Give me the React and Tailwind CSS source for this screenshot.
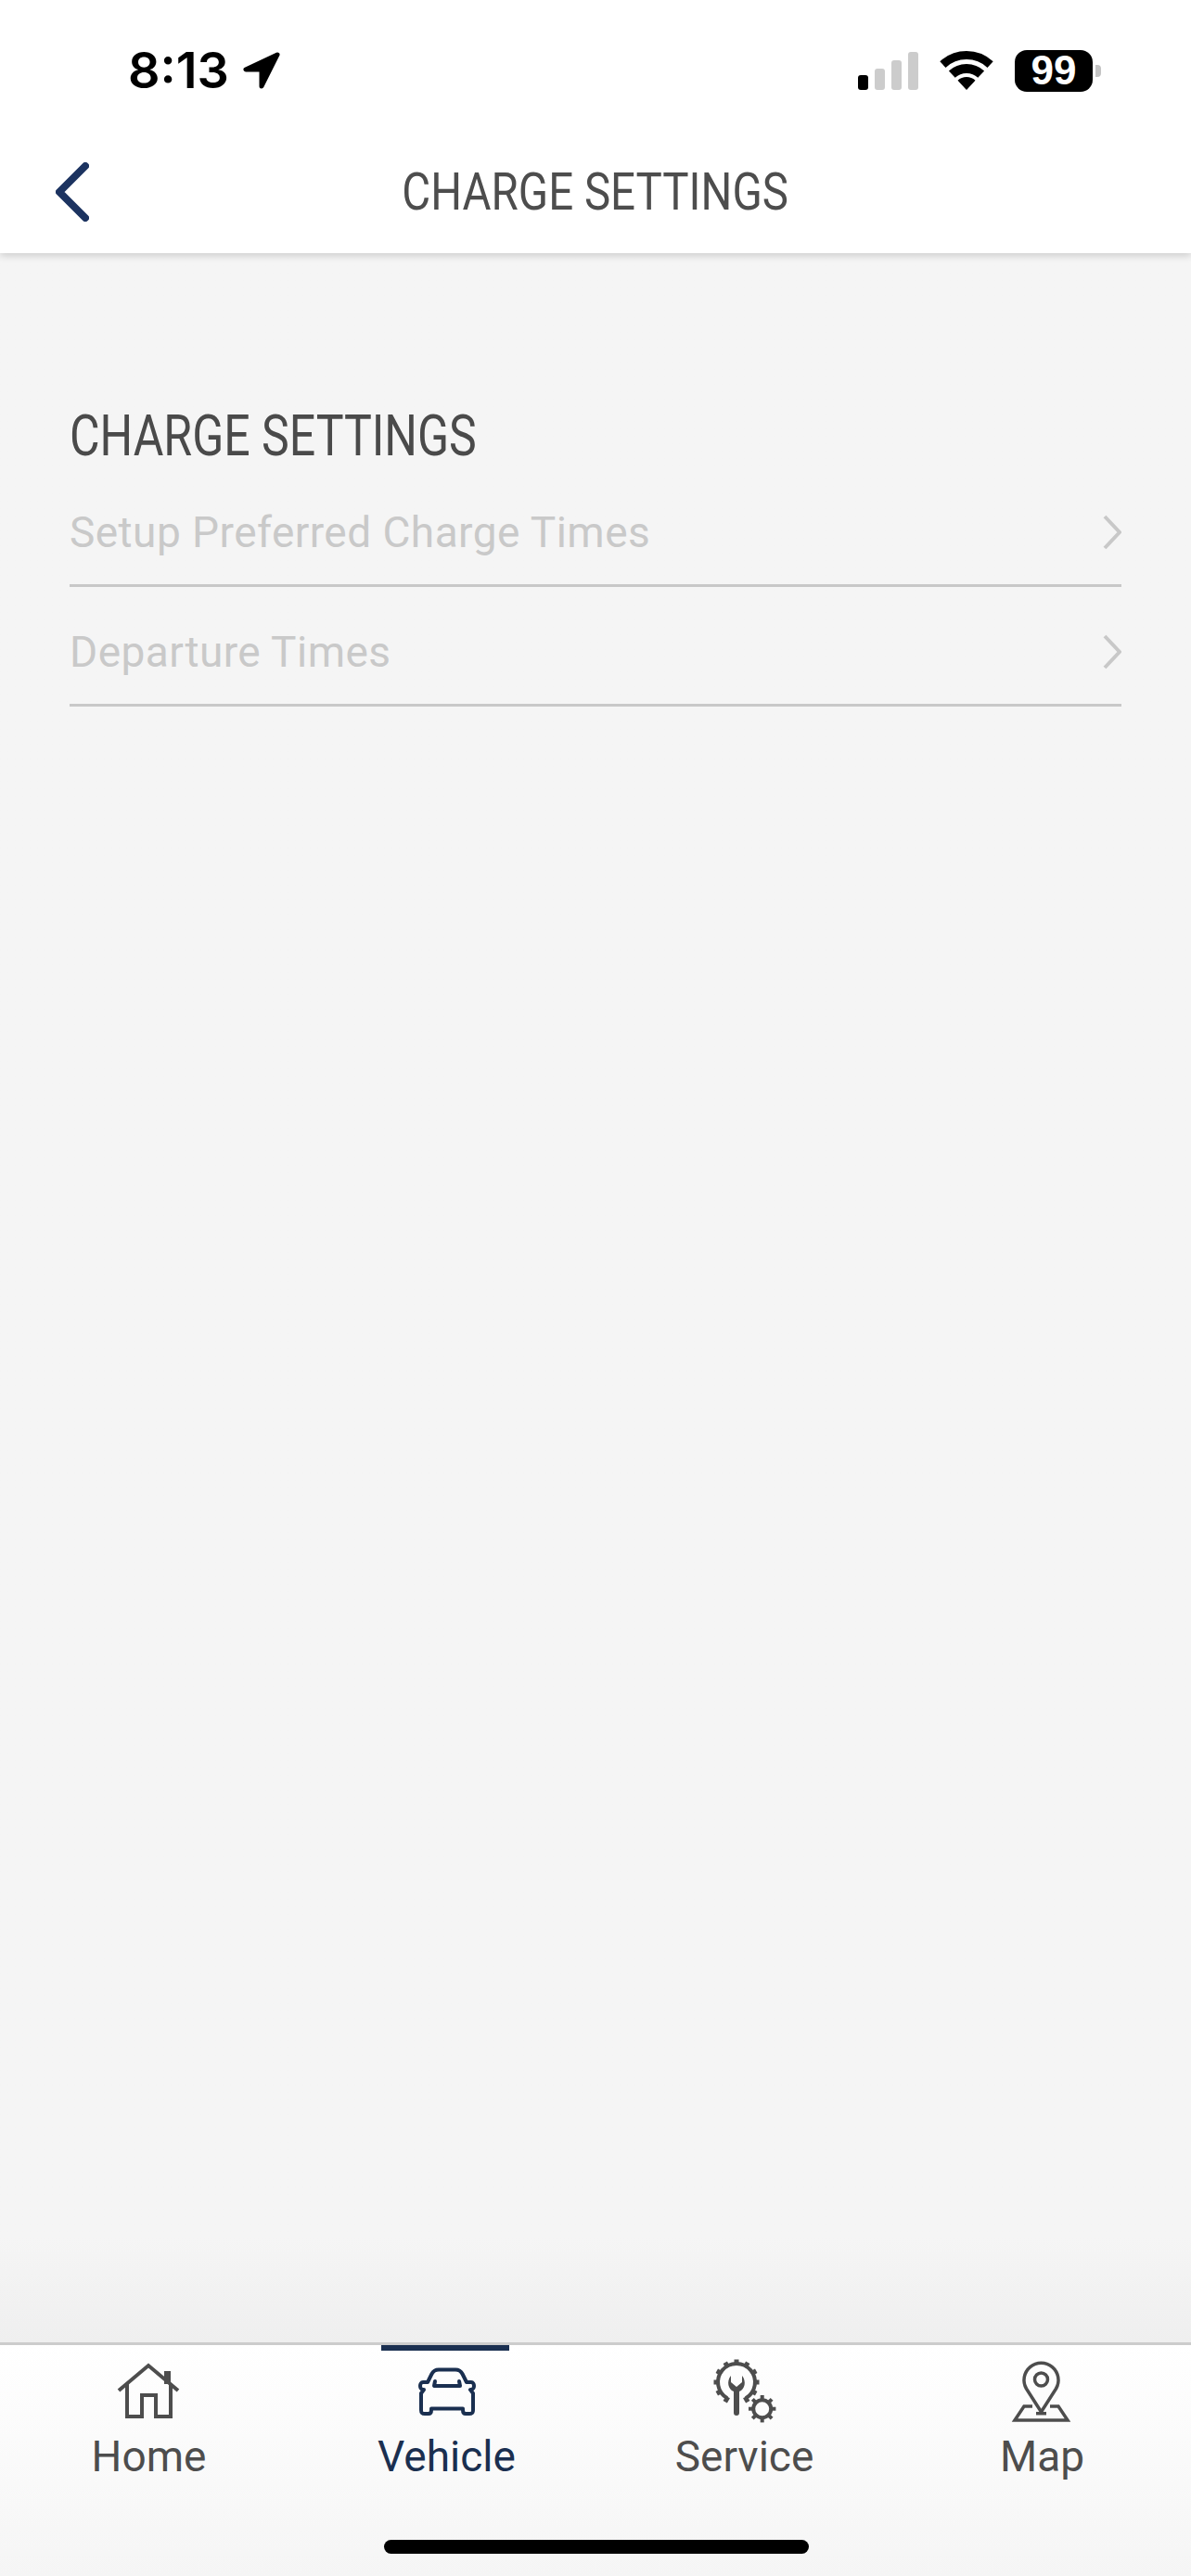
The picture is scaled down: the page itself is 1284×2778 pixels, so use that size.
const GEAR_ANGLES = [0, 30, 60, 90, 120, 150, 210, 240, 270, 300, 330]
const SMALL_GEAR_ANGLES = [0, 45, 90, 135, 180, 225, 270, 315]

function HomeIcon() {
  return (
    <svg width="70" height="62" viewBox="0 0 70 62" fill="none" stroke="currentColor" strokeWidth="4">
      <path d="M2 30 L34 3 L66 30" />
      <path d="M11 23 V58 H27 V35 H42 V58 H58 V23" />
      <rect x="51" y="9" width="7" height="14" fill="currentColor" stroke="none" />
    </svg>
  )
}

function CarIcon() {
  return (
    <svg width="66" height="52" viewBox="0 0 66 52" fill="none" stroke="currentColor" strokeWidth="4" strokeLinejoin="round" strokeLinecap="round">
      <path d="M24 2.5 C20 2.5 18 4 16.5 7 L12 16 H7 C3 16 3 24 7 24 H8 L5 28 V46 C5 49 6 50 9 50 H13 C15 50 16 49 16 46 V44.5 H50 V46 C50 49 51 50 53 50 H57 C60 50 61 49 61 46 V28 L58 24 H59 C63 24 63 16 59 16 H54 L49.5 7 C48 4 46 2.5 42 2.5 Z" />
      <path d="M20 15 L19 20 H47 L46 15" />
    </svg>
  )
}

function ServiceIcon() {
  return (
    <svg width="70" height="70" viewBox="0 0 70 70" fill="none" stroke="currentColor">
      <path d="M16 42.3 A20 20 0 1 1 36 42.3" strokeWidth="4" />
      {GEAR_ANGLES.map((angle) => (
        <rect key={angle} x="23.5" y="0.5" width="5" height="6" fill="currentColor" stroke="none" transform={`rotate(${angle} 26 25)`} />
      ))}
      <path d="M20 18 C15 24 17 33 23 35 V58 a3 3 0 0 0 6 0 V35 C35 33 37 24 32 18 V25 L26 30 L20 25 Z" fill="currentColor" stroke="none" />
      <circle cx="53.7" cy="53.7" r="9.5" strokeWidth="4" />
      {SMALL_GEAR_ANGLES.map((angle) => (
        <rect key={angle} x="51.7" y="39" width="4" height="5" fill="currentColor" stroke="none" transform={`rotate(${angle} 53.7 53.7)`} />
      ))}
    </svg>
  )
}

function MapIcon() {
  return (
    <svg width="70" height="70" viewBox="0 0 70 70" fill="none" stroke="currentColor" strokeWidth="3.5">
      <path d="M33.5 57 L17.5 32 A18.5 18.5 0 1 1 49.5 32 Z" strokeLinejoin="round" />
      <circle cx="33.5" cy="22" r="7" />
      <path d="M28 58.7 H39" />
      <path d="M24 51 H15 L5 66 H62 L52 51 H43" />
    </svg>
  )
}

function LocationArrow() {
  return (
    <svg width="41" height="40" viewBox="0 0 41 40" fill="#000" stroke="#000" strokeWidth="5" strokeLinejoin="round">
      <path d="M37 3 L3 19 H20 V37 Z" />
    </svg>
  )
}

function WifiIcon() {
  return (
    <svg width="58" height="42" viewBox="0 0 58 42" fill="none" stroke="#000">
      <path d="M3.4 14.6 A37.5 37.5 0 0 1 54.6 14.6" strokeWidth="9" />
      <path d="M13.3 25.2 A23 23 0 0 1 44.7 25.2" strokeWidth="10" />
      <path d="M29 42 L19.5 31.8 A14 14 0 0 1 38.5 31.8 Z" fill="#000" stroke="none" />
    </svg>
  )
}

function StatusBar() {
  return (
    <div className="flex h-[140px] items-start justify-between pl-[138px] pr-[97px] pt-[53px]">
      <div className="flex h-[46px] items-center gap-[15px]">
        <span className="font-['Inter',sans-serif] text-[54px] font-semibold leading-none text-black">8:13</span>
        <LocationArrow />
      </div>
      <div className="flex h-[46px] items-center gap-[23px]">
        <div className="flex h-[41px] items-end gap-[7px]">
          <div className="h-[16px] w-[11px] rounded-[3px] bg-black" />
          <div className="h-[23px] w-[11px] rounded-[3px] bg-[#cccccc]" />
          <div className="h-[32px] w-[11px] rounded-[3px] bg-[#cccccc]" />
          <div className="h-[41px] w-[11px] rounded-[3px] bg-[#cccccc]" />
        </div>
        <WifiIcon />
        <div className="flex items-center gap-[3px]">
          <div className="flex h-[45px] w-[84px] items-center justify-center rounded-[13px] bg-black font-['Liberation_Sans',sans-serif] text-[44px] font-bold leading-none text-white">
            99
          </div>
          <div className="h-[13px] w-[6px] rounded-r-[4px] bg-[#c4c4c4]" />
        </div>
      </div>
    </div>
  )
}

function NavBar() {
  return (
    <div className="grid h-[133px] grid-cols-[1fr_auto_1fr] items-center">
      <div className="pl-[60px]">
        <svg width="36" height="64" viewBox="0 0 36 64" fill="none" stroke="#1c3360" strokeWidth="8" strokeLinecap="round" strokeLinejoin="round">
          <path d="M32 4 L4 32 L32 60" />
        </svg>
      </div>
      <h1 className="scale-x-[0.848] whitespace-nowrap font-['Roboto',sans-serif] text-[56px] font-normal leading-none text-[#4d4d4d]">
        CHARGE SETTINGS
      </h1>
      <div />
    </div>
  )
}

function SettingsRow({ label }) {
  return (
    <div className="flex h-[129px] items-center justify-between border-b-[3px] border-[#c8c8c8] pt-[14px]">
      <span className="font-['Roboto',sans-serif] text-[46px] leading-none tracking-[0.45px] text-[#c9c9c9]">{label}</span>
      <svg width="20" height="38" viewBox="0 0 20 38" fill="none" stroke="#c8c8c8" strokeWidth="4">
        <path d="M2 2 L18 19 L2 36" />
      </svg>
    </div>
  )
}

function TabItem({ label, active, children }) {
  return (
    <div className={`relative flex flex-col items-center pt-[14px] ${active ? 'text-[#1a2f50]' : 'text-[#4d4d4d]'}`}>
      {active ? <div className="absolute left-[90px] top-0 h-[6px] w-[138px] bg-[#1a2f50]" /> : null}
      <div className="flex h-[72px] items-center justify-center">{children}</div>
      <span className="mt-[11px] font-['Roboto',sans-serif] text-[46px] leading-none">{label}</span>
    </div>
  )
}

function TabBar() {
  return (
    <div className="relative h-[252px] border-t-[3px] border-[#cccccc] bg-gradient-to-b from-white to-[#f5f5f5]">
      <div className="grid grid-cols-4">
        <TabItem label="Home"><HomeIcon /></TabItem>
        <TabItem label="Vehicle" active><CarIcon /></TabItem>
        <TabItem label="Service"><ServiceIcon /></TabItem>
        <TabItem label="Map"><MapIcon /></TabItem>
      </div>
      <div className="absolute bottom-[24px] left-[414px] h-[15px] w-[458px] rounded-full bg-black" />
    </div>
  )
}

export default function App() {
  return (
    <div className="flex h-[2778px] w-[1284px] flex-col bg-[#f5f5f5]">
      <header className="relative z-10 bg-white shadow-[0_3px_8px_rgba(0,0,0,0.16)]">
        <StatusBar />
        <NavBar />
      </header>
      <main className="flex-1 bg-gradient-to-b from-[#f5f5f5] from-95% to-[#efefef] px-[75px] pt-[164px]">
        <h2 className="origin-left scale-x-[0.82] whitespace-nowrap font-['Roboto',sans-serif] text-[61px] font-normal leading-[67px] text-[#4a4a4a]">
          CHARGE SETTINGS
        </h2>
        <SettingsRow label="Setup Preferred Charge Times" />
        <SettingsRow label="Departure Times" />
      </main>
      <TabBar />
    </div>
  )
}
